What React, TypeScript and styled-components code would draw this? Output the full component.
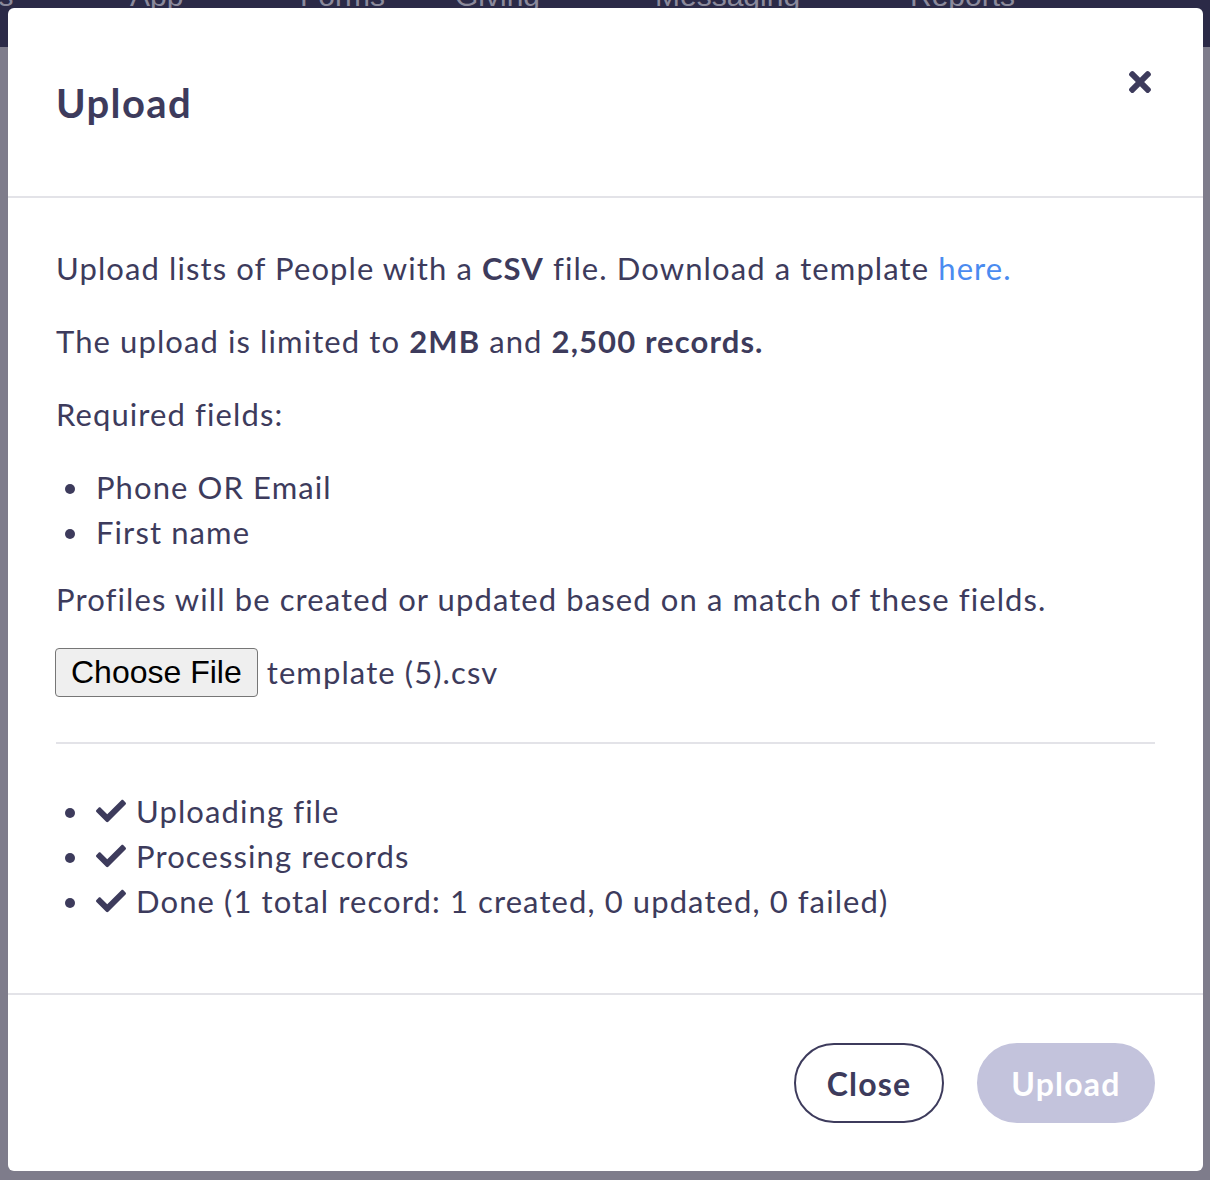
import React from "react";
import styled, { createGlobalStyle } from "styled-components";
import { FaCheck, FaTimes } from "react-icons/fa";

const Global = createGlobalStyle`
  *, *::before, *::after { box-sizing: border-box; }
  html, body { margin: 0; padding: 0; }
  body {
    background: #7e7c8b;
    font-family: Lato, "Open Sans", sans-serif;
    overflow: hidden;
  }
`;

const Page = styled.div`
  position: relative;
  width: 1210px;
  height: 1180px;
  background: #7e7c8b;
  overflow: hidden;
`;

const NavBar = styled.div`
  height: 47px;
  background: #2b2a47;
  overflow: hidden;
  display: flex;
  align-items: flex-start;
`;

const NavItem = styled.span<{ $w: number; $ml?: number }>`
  flex: 0 0 ${(p) => p.$w}px;
  margin-left: ${(p) => p.$ml ?? 0}px;
  margin-top: -19px;
  font-family: "Liberation Sans", Arial, sans-serif;
  font-size: 30px;
  line-height: 30px;
  color: #8b8a9c;
  white-space: nowrap;
`;

const Modal = styled.div`
  position: absolute;
  top: 8px;
  left: 8px;
  width: 1195px;
  height: 1163px;
  background: #ffffff;
  border-radius: 6px;
  display: flex;
  flex-direction: column;
  color: #3d3b5c;
  letter-spacing: 1.1px;
`;

const Header = styled.div`
  flex: 0 0 190px;
  border-bottom: 2px solid #e3e3e8;
  padding: 0 48px;
  display: flex;
  align-items: flex-start;
  justify-content: space-between;
`;

const Title = styled.h2`
  margin: 71px 0 0;
  font-size: 40px;
  line-height: 48px;
  font-weight: 700;
  letter-spacing: 1.4px;
`;

const CloseIcon = styled.button`
  margin-top: 58px;
  margin-right: -1px;
  border: none;
  background: none;
  padding: 0;
  color: #3d3b5c;
  display: flex;
  cursor: pointer;
`;

const Body = styled.div`
  flex: 1;
  padding: 48px 48px 0;
  border-bottom: 2px solid #e3e3e8;
`;

const Para = styled.p`
  margin: 0 0 28px;
  font-size: 31px;
  line-height: 45px;
  b { font-weight: 700; }
`;

const Link = styled.a`
  color: #4a8bf0;
  text-decoration: none;
`;

const BulletList = styled.ul`
  list-style: none;
  margin: 0 0 22px;
  padding-left: 40px;
  font-size: 31px;
  line-height: 45px;
`;

const Bullet = styled.li`
  position: relative;
  &::before {
    content: "";
    position: absolute;
    left: -31px;
    top: 19px;
    width: 10px;
    height: 10px;
    border-radius: 50%;
    background: #3d3b5c;
  }
  svg { vertical-align: -3px; margin-right: 10px; }
`;

const FileRow = styled.div`
  display: flex;
  align-items: center;
  gap: 9px;
  height: 48px;
  margin-top: -2px;
  font-size: 31px;
`;

const FileButton = styled.button`
  height: 49px;
  padding: 0 15px;
  background: #efefef;
  border: 1px solid #767676;
  border-radius: 4px;
  font-family: "Liberation Sans", Arial, sans-serif;
  font-size: 32px;
  letter-spacing: 0;
  color: #000;
  margin-left: -1px;
`;

const Divider = styled.hr`
  border: none;
  border-top: 2px solid #e3e3e8;
  margin: 46px 0 45px;
`;

const Footer = styled.div`
  flex: 0 0 176px;
  padding: 48px 48px 0;
  display: flex;
  justify-content: flex-end;
  align-items: flex-start;
  gap: 33px;
`;

const PillButton = styled.button<{ $primary?: boolean }>`
  height: 80px;
  width: ${(p) => (p.$primary ? "178px" : "150px")};
  padding: 0;
  border-radius: 40px;
  font-family: Lato, "Open Sans", sans-serif;
  font-weight: 700;
  font-size: 32px;
  letter-spacing: 1.2px;
  border: 2px solid ${(p) => (p.$primary ? "#c3c3dc" : "#3d3b5c")};
  background: ${(p) => (p.$primary ? "#c3c3dc" : "#ffffff")};
  color: ${(p) => (p.$primary ? "#ffffff" : "#3d3b5c")};
`;

const navItems: [string, number][] = [
  ["App", 170],
  ["Forms", 155],
  ["Giving", 200],
  ["Messaging", 255],
  ["Reports", 300],
];

export default function App() {
  return (
    <Page>
      <Global />
      <NavBar>
        <NavItem $w={215} $ml={-85}>Groups</NavItem>
        {navItems.map(([t, w]) => (
          <NavItem key={t} $w={w}>
            {t}
          </NavItem>
        ))}
      </NavBar>
      <Modal>
        <Header>
          <Title>Upload</Title>
          <CloseIcon aria-label="Close">
            <FaTimes size={32} />
          </CloseIcon>
        </Header>
        <Body>
          <Para>
            Upload lists of People with a <b>CSV</b> file. Download a template{" "}
            <Link href="#">here.</Link>
          </Para>
          <Para>
            The upload is limited to <b>2MB</b> and <b>2,500 records.</b>
          </Para>
          <Para>Required fields:</Para>
          <BulletList>
            <Bullet>Phone OR Email</Bullet>
            <Bullet>First name</Bullet>
          </BulletList>
          <Para>Profiles will be created or updated based on a match of these fields.</Para>
          <FileRow>
            <FileButton>Choose File</FileButton>
            <span>template (5).csv</span>
          </FileRow>
          <Divider />
          <BulletList>
            <Bullet>
              <FaCheck size={30} />Uploading file
            </Bullet>
            <Bullet>
              <FaCheck size={30} />Processing records
            </Bullet>
            <Bullet>
              <FaCheck size={30} />Done (1 total record: 1 created, 0 updated, 0 failed)
            </Bullet>
          </BulletList>
        </Body>
        <Footer>
          <PillButton>Close</PillButton>
          <PillButton $primary>Upload</PillButton>
        </Footer>
      </Modal>
    </Page>
  );
}
